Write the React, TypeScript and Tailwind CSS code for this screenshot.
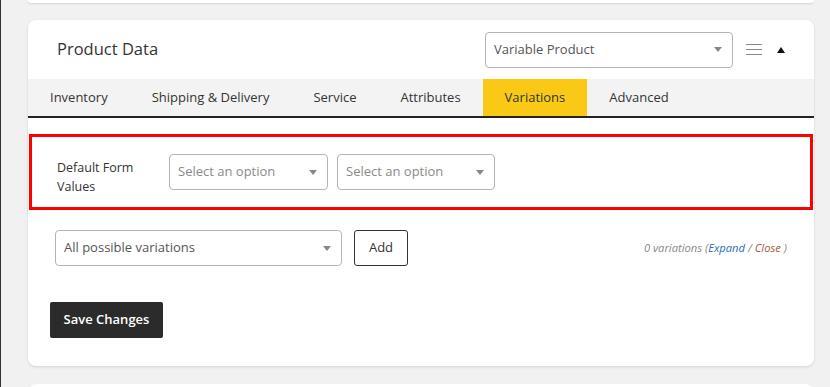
import React from 'react';

const Caret = () => (
  <span className="ml-auto border-x-[4px] border-t-[5px] border-x-transparent border-t-[#888]" />
);

const FakeSelect = ({ label, muted, className }: { label: string; muted?: boolean; className: string }) => (
  <div
    className={`flex items-center rounded-[4px] border border-[#b4b4b4] bg-white pl-[8px] pr-[10px] text-[13px] ${
      muted ? 'text-[#8a8a8a]' : 'text-[#555]'
    } ${className}`}
  >
    <span>{label}</span>
    <Caret />
  </div>
);

const tabs = ['Inventory', 'Shipping & Delivery', 'Service', 'Attributes', 'Variations', 'Advanced'];

export default function App() {
  return (
    <div
      className="h-[387px] w-[830px] overflow-hidden border-l border-[#333] bg-[#f1f1f1]"
      style={{ fontFamily: '"Open Sans", "Liberation Sans", sans-serif' }}
    >
      {/* previous card, cut off */}
      <div className="ml-[27px] h-[3px] w-[786px] rounded-b-[8px] bg-white shadow-[0_1px_2px_rgba(0,0,0,0.12)]" />

      <div className="ml-[27px] mt-[17px] w-[786px] rounded-[8px] bg-white shadow-[0_1px_3px_rgba(0,0,0,0.12)]">
        {/* header */}
        <div className="flex h-[59px] items-center pl-[29px] pr-[29px]">
          <h2 className="text-[16.5px] text-[#333]">Product Data</h2>
          <FakeSelect label="Variable Product" className="ml-auto h-[36px] w-[248px]" />
          <div className="ml-[13px] flex w-[16px] flex-col gap-[4px]">
            <span className="h-px bg-[#888]" />
            <span className="h-px bg-[#888]" />
            <span className="h-px bg-[#888]" />
          </div>
          <span className="ml-[15px] border-x-[4px] border-b-[6px] border-x-transparent border-b-[#111]" />
        </div>

        {/* tabs */}
        <div className="flex h-[39px] border-b-2 border-[#222] bg-[#f3f3f3]">
          {tabs.map((t) => (
            <div
              key={t}
              className={`flex items-center px-[22px] text-[13px] text-[#333] ${
                t === 'Variations' ? 'bg-[#f9c916]' : ''
              }`}
            >
              {t}
            </div>
          ))}
        </div>

        {/* default form values */}
        <div className="mx-px mt-[16px] flex h-[76px] items-center border-[3px] border-[#ff0000] pl-[25px]">
          <div className="w-[112px] pt-[9px] text-[12.5px] leading-[19px] text-[#333]">
            Default Form
            <br />
            Values
          </div>
          <FakeSelect label="Select an option" muted className="h-[36px] w-[159px]" />
          <FakeSelect label="Select an option" muted className="ml-[9px] h-[36px] w-[158px]" />
        </div>

        {/* variations row */}
        <div className="mt-[20px] flex items-center pl-[27px] pr-[27px]">
          <FakeSelect label="All possible variations" className="h-[36px] w-[287px]" />
          <button className="ml-[12px] h-[36px] w-[54px] rounded-[3px] border border-[#333] bg-white text-[13px] text-[#333]">
            Add
          </button>
          <div className="ml-auto text-[11.2px] italic text-[#888]">
            0 variations (<span className="text-[#2e6bb3]">Expand</span> / <span className="text-[#a35a3a]">Close</span> )
          </div>
        </div>

        {/* save */}
        <div className="pb-[28px] pl-[22px] pt-[36px]">
          <button className="h-[36px] w-[113px] rounded-[2px] bg-[#2b2b2b] text-[13px] font-semibold text-white">
            Save Changes
          </button>
        </div>
      </div>

      {/* next card */}
      <div className="ml-[27px] mt-[18px] h-[20px] w-[786px] rounded-t-[8px] bg-white shadow-[0_1px_2px_rgba(0,0,0,0.12)]" />
    </div>
  );
}
